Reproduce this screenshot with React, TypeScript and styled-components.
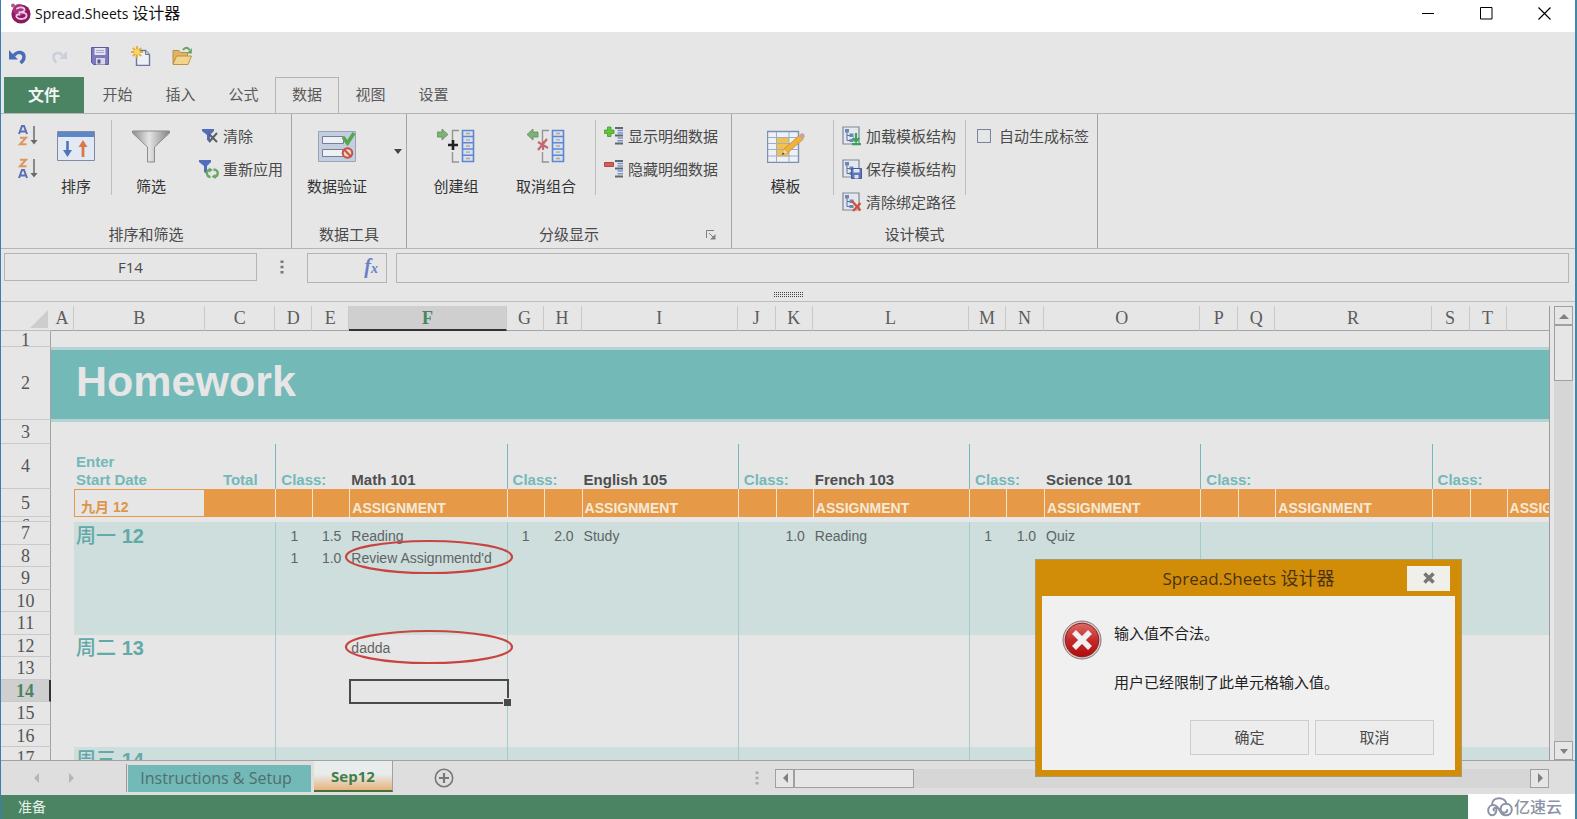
import React from "react";
import styled, { createGlobalStyle, css } from "styled-components";

const UI = `"Open Sans", "Noto Sans CJK SC", sans-serif`;
const SHEET = `"Liberation Sans", "Noto Sans CJK SC", sans-serif`;
const SERIF = `"Liberation Serif", "Noto Sans CJK SC", serif`;

const c = {
  bg: "#e6e6e6",
  line: "#b4b4b4",
  text: "#4a4a4a",
  dark: "#333333",
  green: "#4b8463",
  teal: "#72b9b8",
  tealLight: "#b5d3d3",
  tealLine: "#a3cdcd",
  band: "#cddedd",
  orange: "#e69a47",
};

const Global = createGlobalStyle`
  * { box-sizing: border-box; }
  body { margin: 0; background: ${c.bg}; }
  button, input { font: inherit; color: inherit; margin: 0; }
  button { padding: 0; border: 0; background: none; cursor: default; }
  svg { display: block; flex: none; }
`;

const Window = styled.div`
  position: relative;
  display: flex;
  flex-direction: column;
  height: 100vh;
  overflow: hidden;
  background: ${c.bg};
  border-left: 1px solid #3d7db5;
  border-right: 2px solid #3f8aa6;
  font: 15px/22px ${UI};
  color: ${c.text};
`;

const TitleBar = styled.header`
  display: flex;
  align-items: center;
  height: 32px;
  flex: none;
  padding: 0 2px 6px 8px;
  background: #fff;
  color: #111;
`;
const AppTitle = styled.h1`
  flex: 1;
  margin: 0 0 0 4px;
  font: 14px/22px ${UI};
`;
const Cjk = styled.span<{ $size: number }>`
  font-size: ${(p) => p.$size}px;
`;
const WindowButton = styled.button`
  display: grid;
  place-items: center;
  width: 58px;
  height: 26px;
`;

const QuickBar = styled.div`
  display: flex;
  align-items: center;
  gap: 21px;
  height: 45px;
  flex: none;
  padding: 2px 0 0 7px;
`;
const QuickButton = styled.button`
  width: 20px;
  height: 20px;
`;

const TabBar = styled.nav`
  display: flex;
  height: 37px;
  flex: none;
  padding-left: 3px;
  border-bottom: 1px solid ${c.line};
`;
const FileTab = styled.button`
  width: 80px;
  margin-right: 2px;
  background: ${c.green};
  color: #f2f5f3;
  font-size: 16px;
  font-weight: 700;
`;
const Tab = styled.button<{ $active?: boolean }>`
  width: ${(p) => (p.$active ? 64 : 63)}px;
  padding-bottom: 4px;
  border: 1px solid transparent;
  border-bottom: 0;
  color: #5a5a5a;
  ${(p) => p.$active && css`border-color: ${c.line};`}
`;

const Ribbon = styled.section`
  display: flex;
  height: 135px;
  flex: none;
  border-bottom: 1px solid ${c.line};
`;
const Group = styled.div<{ $width: number }>`
  position: relative;
  display: flex;
  flex-direction: column;
  width: ${(p) => p.$width}px;
  border-right: 1px solid #a4a4a4;
`;
const GroupBody = styled.div<{ $start?: number }>`
  display: flex;
  flex: 1;
  padding: 6px 0 0 ${(p) => p.$start ?? 0}px;
`;
const GroupLabel = styled.div`
  height: 25px;
  text-align: center;
`;
const Launcher = styled.button`
  position: absolute;
  right: 15px;
  bottom: 8px;
`;
const BigButton = styled.button<{ $width: number }>`
  display: flex;
  flex-direction: column;
  align-items: center;
  justify-content: flex-start;
  gap: 12px;
  width: ${(p) => p.$width}px;
  height: 80px;
  padding-top: 9px;
  color: ${c.dark};
`;
const DropArrow = styled.button`
  width: 24px;
  height: 62px;
  padding-right: 3px;
  display: grid;
  align-items: center;
  justify-items: end;
`;
const Divider = styled.div<{ $before?: number; $after?: number }>`
  width: 1px;
  height: 75px;
  margin: 0 ${(p) => p.$after ?? 0}px 0 ${(p) => p.$before ?? 0}px;
  background: #bdbdbd;
`;
const Stack = styled.div<{ $before?: number }>`
  display: flex;
  flex-direction: column;
  margin-left: ${(p) => p.$before ?? 0}px;
`;
const SmallButton = styled.button`
  display: flex;
  align-items: center;
  gap: 4px;
  height: 33px;
  padding-bottom: 2px;
  white-space: nowrap;
`;
const CheckLabel = styled.label`
  display: flex;
  align-items: center;
  gap: 8px;
  height: 32px;
  white-space: nowrap;
`;
const Check = styled.input`
  appearance: none;
  width: 14px;
  height: 14px;
  border: 1px solid #7b8596;
  box-shadow: inset 0 0 0 1px #dfe3ea;
`;

const FormulaBar = styled.div`
  position: relative;
  display: flex;
  align-items: flex-start;
  height: 53px;
  flex: none;
  padding: 4px 6px 0 3px;
  border-bottom: 1px solid #bdbdbd;
`;
const NameBox = styled.input`
  width: 253px;
  height: 28px;
  border: 1px solid ${c.line};
  background: none;
  text-align: center;
`;
const BarDots = styled.div`
  display: grid;
  place-items: center;
  width: 50px;
  height: 28px;
`;
const FxButton = styled.button`
  width: 80px;
  height: 30px;
  padding: 0 8px 2px 0;
  border: 1px solid ${c.line};
  margin-right: 9px;
  text-align: right;
  color: #6b80c4;
  font: italic 700 20px/24px ${SERIF};
`;
const FxSub = styled.span`
  font-size: 14px;
`;
const FormulaInput = styled.input`
  flex: 1;
  min-width: 0;
  height: 30px;
  border: 1px solid ${c.line};
  background: none;
`;
const Grip = styled.div`
  position: absolute;
  left: 50%;
  bottom: 4px;
  width: 29px;
  height: 5px;
  margin-left: -14px;
  background:
    repeating-linear-gradient(180deg, transparent 0 1px, ${c.bg} 1px 2px),
    repeating-linear-gradient(90deg, #444 0 1px, transparent 1px 2px);
`;

const Work = styled.main`
  display: flex;
  flex: 1;
  min-height: 0;
  padding-top: 4px;
`;
const SheetView = styled.div`
  flex: 1;
  min-width: 0;
  overflow: hidden;
  border-right: 1px solid #9c9c9c;
`;
const Sheet = styled.table`
  width: 100%;
  min-width: 1662px;
  table-layout: fixed;
  border-collapse: separate;
  border-spacing: 0;
  font: 14px/18px ${SHEET};
`;
const ColHead = styled.th<{ $active?: boolean }>`
  height: 25px;
  padding: 0;
  border-right: 1px solid #c9c9c9;
  border-bottom: 1px solid #a3a3a3;
  font: 18px/22px ${SERIF};
  color: #5c5c5c;
  ${(p) =>
    p.$active &&
    css`
      background: #cfcfcf;
      border-bottom: 2px solid #333;
      font-weight: 700;
      color: ${c.green};
    `}
`;
const Corner = styled.td`
  height: 25px;
  padding: 0 3px 2px 0;
  vertical-align: bottom;
  border-bottom: 1px solid #c0c0c0;
  svg {
    margin-left: auto;
  }
`;
const RowHead = styled.th<{ $active?: boolean; $h: number }>`
  height: ${(p) => p.$h}px;
  padding: 0;
  border-right: 1px solid #a3a3a3;
  border-bottom: 1px solid #c9c9c9;
  font: 18px/18px ${SERIF};
  color: #555;
  ${(p) =>
    p.$active &&
    css`
      background: #cfcfcf;
      border-right: 2px solid #333;
      font-weight: 700;
      color: ${c.green};
    `}
`;
const RowHeadClip = styled.div<{ $h: number }>`
  height: ${(p) => p.$h}px;
  overflow: hidden;
`;
const Cell = styled.td<{ $band?: boolean; $rule?: string; $align?: string }>`
  position: relative;
  padding: 0 2px;
  vertical-align: bottom;
  white-space: nowrap;
  color: #5f6464;
  text-align: ${(p) => p.$align ?? "left"};
  background: ${(p) => (p.$band ? c.band : "transparent")};
  ${(p) => p.$rule && css`border-left: 1px solid ${p.$rule};`}
  ${(p) => p.$align === "right" && css`padding-right: 8px;`}
`;
const DayCell = styled(Cell)`
  font-size: 20px;
  font-weight: 700;
  line-height: 18px;
  color: #62a9a8;
`;
const DayName = styled.span`
  font-weight: 500;
`;
const Banner = styled.td`
  padding: 0 0 8px 25px;
  border-top: 3px solid ${c.tealLight};
  border-bottom: 1px solid ${c.tealLight};
  background: ${c.teal};
  color: ${c.bg};
  font: 700 43px/50px ${SHEET};
`;
const BannerEdge = styled.td`
  border-top: 2px solid ${c.tealLight};
`;
const HeadCell = styled(Cell)<{ $teal?: boolean }>`
  font-size: 15px;
  font-weight: 700;
  color: ${(p) => (p.$teal ? c.teal : "#4f4f4f")};
  ${(p) => p.$rule && css`padding-left: 5px;`}
`;
const DateCell = styled(Cell)`
  padding-left: 6px;
  border: 1px solid ${c.orange};
  font-weight: 700;
  color: #dd9548;
`;
const OrangeCell = styled(Cell)`
  background: ${c.orange};
  color: #f5ead9;
  font-weight: 700;
`;
const Ring = styled.svg`
  position: absolute;
  left: -5px;
  top: -6px;
  z-index: 1;
`;
const Selection = styled.div`
  position: absolute;
  z-index: 1;
  inset: -1px -2px -2px 0;
  border: 2px solid #4a4a4a;
`;
const Handle = styled.div`
  position: absolute;
  right: -4px;
  bottom: -4px;
  width: 8px;
  height: 8px;
  background: #4a4a4a;
  border-left: 1px solid ${c.bg};
  border-top: 1px solid ${c.bg};
`;

const VScroll = styled.div`
  display: flex;
  flex-direction: column;
  width: 19px;
  margin: 0 2px 0 4px;
  background: #d6d6d6;
`;
const HScroll = styled.div`
  display: flex;
  flex: 1;
  height: 19px;
  background: #d6d6d6;
`;
const ScrollButton = styled.button`
  display: grid;
  place-items: center;
  width: 19px;
  height: 19px;
  flex: none;
  border: 1px solid #a0a0a0;
  background: ${c.bg};
`;
const Thumb = styled.div<{ $vertical?: boolean }>`
  border: 1px solid #a0a0a0;
  background: ${c.bg};
  ${(p) => (p.$vertical ? css`height: 56px;` : css`width: 120px;`)}
`;
const Spacer = styled.div`
  flex: 1;
`;

const SheetTabs = styled.div`
  display: flex;
  align-items: center;
  height: 35px;
  flex: none;
  padding-right: 26px;
  border-top: 1px solid #a3a3a3;
  background: #dedede;
`;
const TabArrows = styled.div`
  display: flex;
  justify-content: space-between;
  width: 126px;
  height: 28px;
  align-items: center;
  padding: 0 50px 0 30px;
  border-right: 1px solid #9b9b9b;
`;
const SheetTab = styled.button`
  width: 183px;
  height: 27px;
  margin: 0 3px 0 1px;
  padding: 0 7px 1px 0;
  background: ${c.teal};
  color: #4f6f6e;
  font-size: 16px;
`;
const ActiveSheetTab = styled.button`
  align-self: flex-start;
  width: 79px;
  height: 31px;
  border-right: 1px solid #a0a0a0;
  border-bottom: 2px solid #4b6d3c;
  background: linear-gradient(#e9ecec 45%, #e6b37c);
  color: #3f7d4c;
  font-weight: 700;
`;
const AddSheet = styled.button`
  margin-left: 41px;
`;
const TabSplit = styled.div`
  display: grid;
  place-items: center;
  width: 36px;
`;
const TabSpace = styled.div`
  flex: 0 1 285px;
`;
const StatusBar = styled.footer`
  height: 24px;
  flex: none;
  padding-left: 17px;
  background: ${c.green};
  color: #e8efe9;
  font-size: 14px;
  line-height: 24px;
`;
const Watermark = styled.div`
  position: absolute;
  right: -2px;
  bottom: 0;
  display: flex;
  align-items: center;
  gap: 1px;
  width: 109px;
  height: 25px;
  padding-left: 19px;
  background: #fff;
  color: #8c93a5;
  font: 500 16px/24px ${UI};
`;

const Dialog = styled.div`
  position: absolute;
  right: 113px;
  bottom: 42px;
  width: 427px;
  padding: 0 6px 6px;
  border: 1px solid #a99a72;
  background: #d28d08;
  color: #222;
`;
const DialogHead = styled.div`
  display: flex;
  align-items: center;
  height: 36px;
  padding-right: 5px;
`;
const DialogTitle = styled.h2`
  flex: 1;
  margin: 0;
  padding-left: 48px;
  text-align: center;
  font: 17px/26px ${UI};
  color: #4a3210;
`;
const DialogClose = styled.button`
  display: grid;
  place-items: center;
  width: 43px;
  height: 25px;
  background: #f0f0ea;
`;
const DialogBody = styled.div`
  display: flex;
  gap: 12px;
  padding: 24px 20px 0;
  background: #f0f0f0;
`;
const Message = styled.p`
  margin: 2px 0 27px;
`;
const DialogActions = styled.div`
  display: flex;
  justify-content: flex-end;
  gap: 6px;
  padding: 0 21px 15px;
  background: #f0f0f0;
`;
const DialogButton = styled.button`
  width: 119px;
  height: 35px;
  padding-bottom: 2px;
  border: 1px solid #cdcdcd;
  background: #ededed;
  color: ${c.text};
`;

/* ---------- icons ---------- */

const Logo = () => (
  <svg width="22" height="22" viewBox="0 0 22 22">
    <circle cx="12" cy="12" r="9.6" fill="#8c1a62" />
    <circle cx="10" cy="8" r="6" fill="#a8327c" />
    <circle cx="4" cy="3.4" r="2" fill="#b0578e" />
    <path d="M8 6.500c4-2 8-.8 7.500 1.500-.4 2-3.500 2.300-6 2.500 4-.5 8.500.5 8 3.500-.6 3.500-8 4-10 1-.8-1.500.8-3 3-2.500" fill="none" stroke="#f0c8e0" strokeWidth="1.800" strokeLinecap="round" />
  </svg>
);
const Undo = () => (
  <svg width="20" height="20" viewBox="0 0 20 20">
    <path d="M6 9.500c4-5 10-3.500 10 1.500 0 3-1.500 4.500-3.500 6" fill="none" stroke="#4a6dbb" strokeWidth="3.400" />
    <path d="M1 4v9.500h9z" fill="#4a6dbb" />
  </svg>
);
const Redo = () => (
  <svg width="20" height="20" viewBox="0 0 20 20">
    <path d="M13.500 9.500C10 5 4.500 7 4.500 11c0 2.500 1 4 3 5.500" fill="none" stroke="#ccd0dc" strokeWidth="2.600" />
    <path d="M18 5v8h-8z" fill="#ccd0dc" />
  </svg>
);
const Save = () => (
  <svg width="20" height="20" viewBox="0 0 20 20">
    <path d="M1.500 1.500h17v17H3.500l-2-2z" fill="#7e78bf" stroke="#605a9f" />
    <path d="M4.500 2h11v7h-11z" fill="#e4e4f0" />
    <path d="M6 4.500h8M6 6.500h8" stroke="#a9a7cc" />
    <path d="M6 12h9v6.500H6z" fill="#d6d6e4" />
    <path d="M7.500 13.500h3v4h-3z" fill="#5c5699" />
  </svg>
);
const NewFile = () => (
  <svg width="20" height="20" viewBox="0 0 20 20">
    <path d="M5.500 4.500h9l4 4v11h-13z" fill="#edf0f5" stroke="#6a7a98" strokeWidth="1.400" />
    <path d="M14.500 4.500v4h4" fill="#c6d0e2" stroke="#6a7a98" />
    <path d="M6 0v12M0 6h12M1.800 1.800l8.400 8.400M10.200 1.800l-8.400 8.400" stroke="#e9ab2d" strokeWidth="1.800" />
    <circle cx="6" cy="6" r="2.800" fill="#f7d768" />
  </svg>
);
const OpenFile = () => (
  <svg width="20" height="20" viewBox="0 0 20 20">
    <path d="M1 18V4.500h6l1.500 2h7V18z" fill="#e0b366" stroke="#b98d46" />
    <path d="M1 18.500 4.500 10h15L16 18.500z" fill="#f3d48d" stroke="#bf9248" />
    <path d="M11 4c2-3 5-3 6.500 0" fill="none" stroke="#5fa75d" strokeWidth="2" />
    <path d="M19.800 2v5.500h-5z" fill="#5fa75d" />
  </svg>
);
const SortAz = ({ desc }: { desc?: boolean }) => {
  const a = "M0 8 3 0h2l3 8M1.500 5.500h5";
  const z = "M1 .8h6L1 7.300h6.500";
  return (
    <svg width="24" height="22" viewBox="0 0 24 22">
      <g fill="none" strokeWidth="2">
        <path d={desc ? z : a} transform="translate(2 1)" stroke={desc ? "#de9560" : "#5a70b4"} />
        <path d={desc ? a : z} transform="translate(2 12)" stroke={desc ? "#5a70b4" : "#de9560"} />
        <path d="M17 1v17" stroke="#6a6a6a" strokeWidth="1.500" />
      </g>
      <path d="M13.500 15h7L17 19.500z" fill="#6a6a6a" />
    </svg>
  );
};
const SortIcon = () => (
  <svg width="38" height="34" viewBox="0 0 38 34">
    <path d="M.5 2.500h37v29H.5z" fill="#e3e9f2" stroke="#7d8ca4" />
    <path d="M1 3h36v5H1z" fill="#5d86c6" />
    <path d="M10.500 12v11" stroke="#4f74ba" strokeWidth="2.600" />
    <path d="M6 21h9l-4.500 7z" fill="#4f74ba" />
    <path d="M26 28V15" stroke="#d9794a" strokeWidth="2.800" />
    <path d="M21.500 18h9L26 11z" fill="#d9794a" />
  </svg>
);
const FunnelIcon = () => (
  <svg width="38" height="34" viewBox="0 0 38 34">
    <defs>
      <linearGradient id="funnel">
        <stop offset="0" stopColor="#8c8c8c" />
        <stop offset=".45" stopColor="#e4e4e4" />
        <stop offset="1" stopColor="#858585" />
      </linearGradient>
    </defs>
    <path d="M.5 2h37v2L22.500 18v15h-7V18L.5 4z" fill="url(#funnel)" stroke="#8b8b8b" />
  </svg>
);
const SmallFunnel = ({ refresh }: { refresh?: boolean }) => (
  <svg width="20" height="20" viewBox="0 0 20 20">
    {refresh ? (
      <>
        <path d="M0 1h12v2L8 7v8l-3-2V7L0 3z" fill="#536db8" />
        <path d="M11.500 10.500c-3 .5-4 2.500-3.500 4.500s1.500 3 3.500 3M14.500 10.500c3 0 4.500 2 4.200 4.200-.3 2-1.700 3.300-3.700 3.300" fill="none" stroke="#69a862" strokeWidth="2.400" />
        <path d="M10 8.500l4 2.500-4 2.500zM16.500 15v5l-4-2.500z" fill="#69a862" />
      </>
    ) : (
      <>
        <path d="M3 3h12v2l-4 4v7l-3-2V9L3 5z" fill="#536db8" />
        <path d="m10 8 8 8M18 7l-8 9" stroke="#5c5c66" strokeWidth="2" />
      </>
    )}
  </svg>
);
const ValidateIcon = () => (
  <svg width="38" height="34" viewBox="0 0 38 34">
    <path d="M.5 2.500h37v30H.5z" fill="#c5cede" stroke="#98a5b8" />
    <path d="M4.500 7.500h21v7h-21zM4.500 20.500h21v7h-21z" fill="#eef0f4" stroke="#71809a" />
    <path d="m25 8 4.500 6L36 4" fill="none" stroke="#55a84d" strokeWidth="3.600" />
    <circle cx="29.500" cy="24" r="4.800" fill="#ead0cb" stroke="#c4513d" strokeWidth="2" />
    <path d="m26 20.500 7 7" stroke="#c4513d" strokeWidth="2" />
  </svg>
);
const GroupIcon = ({ remove }: { remove?: boolean }) => (
  <svg width="38" height="34" viewBox="0 0 38 34">
    <path d={remove ? "M0 5.500 6 0v3h5v5H6v3z" : "M11 5.500 5 0v3H0v5h5v3z"} fill="#80b078" stroke="#5c9157" strokeWidth=".8" />
    <path d="M22 1.500h-6.500V12M15.500 23v10H22" fill="none" stroke="#949494" strokeWidth="1.400" />
    {remove ? (
      <path d="m11 13 10 6M20 10l-9 11M16 12v9" stroke="#c06a72" strokeWidth="2.200" />
    ) : (
      <path d="M11 16h10M16 11v10" stroke="#222" strokeWidth="2.600" />
    )}
    <path d="M25.500 1.500h11v31h-11z" fill="#d4e0f5" stroke="#6286cc" strokeWidth="1.600" />
    <path d="M25.500 7.500h11M25.500 13.800h11M25.500 20h11M25.500 26.300h11" stroke="#6286cc" strokeWidth="1.500" />
    <path d="M29 4.500h4M29 10.800h4M29 17h4M29 23.200h4M29 29.500h4" stroke="#bda67e" strokeWidth="1.300" />
  </svg>
);
const DetailIcon = ({ hide }: { hide?: boolean }) => (
  <svg width="20" height="20" viewBox="0 0 20 20">
    {hide ? (
      <path d="M.5 3.500h9v4h-9z" fill="#ce5f5f" stroke="#b04a4a" />
    ) : (
      <path d="M3.500 1h3.500v3h3v3.500H7v3H3.500v-3h-3V4h3z" fill="#62c33c" stroke="#47982c" strokeWidth=".8" />
    )}
    <path d="M11 2h8M11 9.500h8M11 17.500h8" stroke="#5d6673" strokeWidth="1.800" />
    <path d="M13.500 4.500H19M13.500 7H19M13.500 12H19M13.500 14.800H19" stroke="#7794cd" strokeWidth="1.600" />
  </svg>
);
const TemplateIcon = () => (
  <svg width="38" height="34" viewBox="0 0 38 34">
    <path d="M.5 2.500h31v31H.5z" fill="#eef1f6" stroke="#7b90b2" strokeWidth="1.400" />
    <path d="M10 8.500h12v19H10z" fill="#f2c14d" />
    <path d="M1 8.500h30M1 14.500h30M1 20.500h30M1 27h30M9.500 3v30M22 3v30" stroke="#9eadc8" />
    <path d="m15 25.500 2-5.500L32 6.500l4 4L20.500 24z" fill="#eeb13c" stroke="#ba893f" strokeWidth=".7" />
    <path d="m32 6.500 2-2c2-1 4.500 1.500 3.500 3.500L36 10.500z" fill="#c9a0a6" />
    <path d="m15 25.500 2-5 3.500 3.500z" fill="#f0dcb8" />
    <path d="m15 26 1-2.500 1.500 1.300z" fill="#333" />
  </svg>
);
const TreeFileIcon = ({ kind }: { kind: "load" | "save" | "clear" }) => (
  <svg width="20" height="20" viewBox="0 0 20 20">
    <path d="M1 1h16v17H1z" fill="#e3e8ef" stroke="#7c8798" strokeWidth="1.200" />
    <path d="M5 6v8.500h4M5 9.500h4" fill="none" stroke="#5b6f93" />
    <path d="M3 3h4v3.500H3zM7.500 7.500h4V11h-4zM7.500 13h4v3h-4z" fill="#6c87b4" />
    {kind === "load" && <path d="M14 7v7M10.800 12l3.200 3.500 3.200-3.500M10 18.200h9" fill="none" stroke="#3aa35a" strokeWidth="2.200" />}
    {kind === "save" && (
      <>
        <path d="M9.500 9.500h10v10h-10z" fill="#6076bc" stroke="#46599b" />
        <path d="M11.500 10h6v3.500h-6zM12.500 16h4v3.500h-4z" fill="#dfe4f2" />
      </>
    )}
    {kind === "clear" && <path d="m10 9 8.500 9.500M18.500 11 11 19" stroke="#d4503e" strokeWidth="2.400" />}
  </svg>
);
const Tri = ({ dir, fill = "#808080" }: { dir: "up" | "down" | "left" | "right"; fill?: string }) => {
  const d = { up: "M0 8h10L5 3z", down: "M1 3h8L5 8z", left: "M8 0v10L3 5z", right: "M3 0v10l5-5z" }[dir];
  return (
    <svg width="10" height="10" viewBox="0 0 10 10">
      <path d={d} fill={fill} />
    </svg>
  );
};
const Dots = ({ fill }: { fill: string }) => (
  <svg width="4" height="14" viewBox="0 0 4 14">
    <path d="M.5.500h3v2.500h-3zM.5 5.700h3v2.500h-3zM.5 11h3v2.500h-3z" fill={fill} />
  </svg>
);
const ErrorIcon = () => (
  <svg width="40" height="40" viewBox="0 0 40 40">
    <defs>
      <linearGradient id="err" x2="0" y2="1">
        <stop offset="0" stopColor="#dc6a66" />
        <stop offset=".5" stopColor="#c42a2a" />
        <stop offset="1" stopColor="#b00c0c" />
      </linearGradient>
    </defs>
    <circle cx="20" cy="20" r="19" fill="#d0cccc" stroke="#8f7070" strokeWidth="1" />
    <circle cx="20" cy="20" r="16.800" fill="url(#err)" stroke="#8f1c1c" />
    <path d="m12 12 16 16M28 12 12 28" stroke="#f1efef" strokeWidth="5.500" />
  </svg>
);
const CloudLogo = () => (
  <svg width="26" height="20" viewBox="0 0 26 20">
    <g fill="none" stroke="#8c93a5" strokeWidth="2" strokeLinecap="round">
      <path d="M5 7.500C5 3.500 8.500 1.200 12 1.200c4 0 7 2.500 7.300 5.300" />
      <path d="M7 13.500a1.500 1.500 0 1 1 2.500-1.200c0 3.500-2 6-4 6-2.500 0-4.300-2.300-4.300-5C1.200 10 3.700 8 6.500 8c3.500 0 5 3 6.500 6 1.300 2.700 3 4.300 5.800 4.300 3.400 0 6-2.400 6-5.800s-2.600-5.700-5.700-5.700c-3.300 0-5.400 2.300-5.400 5.200 0 2.300 1.700 3.700 3.500 3.700s3-1.200 3-2.700" />
    </g>
  </svg>
);
const RedRing = () => (
  <Ring width="170" height="36" viewBox="0 0 170 36">
    <ellipse cx="85" cy="18" rx="83" ry="16" fill="none" stroke="#c94440" strokeWidth="2.200" />
  </Ring>
);

/* ---------- sheet ---------- */

const widths = [50, 23, 131, 70, 37, 37, 157, 37, 38, 156, 38, 37, 156, 37, 38, 156, 38, 37, 156, 38, 37, 156];
const letters = "ABCDEFGHIJKLMNOPQRSTU".split("");
const courses = ["Math 101", "English 105", "French 103", "Science 101", "", ""];

type Entry = [string, string, string];
const entries: Record<number, Entry[]> = {
  7: [["1", "1.5", "Reading"], ["1", "2.0", "Study"], ["", "1.0", "Reading"], ["1", "1.0", "Quiz"]],
  8: [["1", "1.0", "Review Assignmentd'd"]],
  12: [["", "", "dadda"]],
};
const days: Record<number, [string, string]> = { 7: ["周一", "12"], 12: ["周二", "13"], 17: ["周三", "14"] };
const ringed = [8, 12];
const heights = [23, 22, 23, 22, 23, 22, 23, 22, 23, 22, 22];

const Head = ({ n, h }: { n: number; h: number }) => (
  <RowHead scope="row" $h={h} $active={n === 14}>
    {n}
  </RowHead>
);

const DayRow = ({ n, h }: { n: number; h: number }) => {
  const band = n < 12 || n > 16;
  const day = days[n];
  return (
    <tr>
      <Head n={n} h={h} />
      <td />
      <DayCell $band={band} colSpan={2}>
        {day && (
          <>
            <DayName>{day[0]}</DayName> {day[1]}
          </>
        )}
      </DayCell>
      {courses.map((_, i) => {
        const e = entries[n]?.[i] ?? ["", "", ""];
        return (
          <React.Fragment key={i}>
            <Cell $band={band} $rule={c.tealLine} $align="center">{e[0]}</Cell>
            <Cell $band={band} $align="right">{e[1]}</Cell>
            <Cell $band={band}>
              {e[2]}
              {i === 0 && ringed.includes(n) && <RedRing />}
              {i === 0 && n === 14 && (
                <Selection>
                  <Handle />
                </Selection>
              )}
            </Cell>
          </React.Fragment>
        );
      })}
    </tr>
  );
};

const Homework = () => (
  <Sheet>
    <colgroup>
      {widths.map((w, i) => (
        <col key={i} style={{ width: w }} />
      ))}
    </colgroup>
    <thead>
      <tr>
        <Corner>
          <svg width="18" height="18" viewBox="0 0 18 18">
            <path d="M18 0v18H0z" fill="#cdcdcd" />
          </svg>
        </Corner>
        {letters.map((l) => (
          <ColHead key={l} scope="col" $active={l === "F"}>
            {l}
          </ColHead>
        ))}
      </tr>
    </thead>
    <tbody>
      <tr>
        <RowHead scope="row" $h={16}>
          <RowHeadClip $h={15}>1</RowHeadClip>
        </RowHead>
        <td colSpan={21} />
      </tr>
      <tr>
        <Head n={2} h={73} />
        <Banner colSpan={21}>Homework</Banner>
      </tr>
      <tr>
        <Head n={3} h={24} />
        <BannerEdge colSpan={21} />
      </tr>
      <tr>
        <Head n={4} h={45} />
        <td />
        <HeadCell $teal>
          Enter
          <br />
          Start Date
        </HeadCell>
        <HeadCell $teal $align="center">Total</HeadCell>
        {courses.map((name, i) => (
          <React.Fragment key={i}>
            <HeadCell $teal $rule={c.teal} colSpan={2}>Class:</HeadCell>
            <HeadCell>{name}</HeadCell>
          </React.Fragment>
        ))}
      </tr>
      <tr>
        <Head n={5} h={28} />
        <td />
        <DateCell>九月 12</DateCell>
        <OrangeCell />
        {courses.map((_, i) => (
          <React.Fragment key={i}>
            <OrangeCell $rule="#f3e3cf" />
            <OrangeCell $rule="#f3e3cf" />
            <OrangeCell $rule="#f3e3cf">ASSIGNMENT</OrangeCell>
          </React.Fragment>
        ))}
      </tr>
      <tr>
        <RowHead scope="row" $h={5}>
          <RowHeadClip $h={4}>6</RowHeadClip>
        </RowHead>
        <td colSpan={21} />
      </tr>
      {heights.map((h, i) => (
        <DayRow key={i} n={i + 7} h={h} />
      ))}
    </tbody>
  </Sheet>
);

export default function App() {
  return (
    <Window>
      <Global />
      <TitleBar>
        <Logo />
        <AppTitle>
          Spread.Sheets <Cjk $size={16}>设计器</Cjk>
        </AppTitle>
        <WindowButton aria-label="最小化">
          <svg width="13" height="13"><path d="M0 6.500h12" stroke="#000" /></svg>
        </WindowButton>
        <WindowButton aria-label="最大化">
          <svg width="13" height="13"><path d="M.5.500h11.500v11.500H.5z" fill="none" stroke="#000" /></svg>
        </WindowButton>
        <WindowButton aria-label="关闭">
          <svg width="13" height="13"><path d="m.5.500 12 12M12.500.500l-12 12" stroke="#000" strokeWidth="1.200" /></svg>
        </WindowButton>
      </TitleBar>

      <QuickBar>
        <QuickButton aria-label="撤销"><Undo /></QuickButton>
        <QuickButton aria-label="恢复"><Redo /></QuickButton>
        <QuickButton aria-label="保存"><Save /></QuickButton>
        <QuickButton aria-label="新建"><NewFile /></QuickButton>
        <QuickButton aria-label="打开"><OpenFile /></QuickButton>
      </QuickBar>

      <TabBar>
        <FileTab>文件</FileTab>
        {["开始", "插入", "公式", "数据", "视图", "设置"].map((t) => (
          <Tab key={t} $active={t === "数据"}>{t}</Tab>
        ))}
      </TabBar>

      <Ribbon>
        <Group $width={291}>
          <GroupBody $start={16}>
            <Stack>
              <SmallButton aria-label="升序"><SortAz /></SmallButton>
              <SmallButton aria-label="降序"><SortAz desc /></SmallButton>
            </Stack>
            <BigButton $width={70}><SortIcon />排序</BigButton>
            <Divider />
            <BigButton $width={78}><FunnelIcon />筛选</BigButton>
            <Stack $before={9}>
              <SmallButton><SmallFunnel />清除</SmallButton>
              <SmallButton><SmallFunnel refresh />重新应用</SmallButton>
            </Stack>
          </GroupBody>
          <GroupLabel>排序和筛选</GroupLabel>
        </Group>
        <Group $width={115}>
          <GroupBody>
            <BigButton $width={90}><ValidateIcon />数据验证</BigButton>
            <DropArrow aria-label="数据验证选项"><Tri dir="down" fill="#444" /></DropArrow>
          </GroupBody>
          <GroupLabel>数据工具</GroupLabel>
        </Group>
        <Group $width={325}>
          <GroupBody>
            <BigButton $width={98}><GroupIcon />创建组</BigButton>
            <BigButton $width={82}><GroupIcon remove />取消组合</BigButton>
            <Divider $before={8} />
            <Stack $before={8}>
              <SmallButton><DetailIcon />显示明细数据</SmallButton>
              <SmallButton><DetailIcon hide />隐藏明细数据</SmallButton>
            </Stack>
          </GroupBody>
          <GroupLabel>分级显示</GroupLabel>
          <Launcher aria-label="分级显示设置">
            <svg width="10" height="10"><path d="M.5 8V.500H8M3 3l4 4" fill="none" stroke="#808080" /><path d="M9.500 4v5.500H4z" fill="#808080" /></svg>
          </Launcher>
        </Group>
        <Group $width={366}>
          <GroupBody $start={6}>
            <BigButton $width={95}><TemplateIcon />模板</BigButton>
            <Divider />
            <Stack $before={8}>
              <SmallButton><TreeFileIcon kind="load" />加载模板结构</SmallButton>
              <SmallButton><TreeFileIcon kind="save" />保存模板结构</SmallButton>
              <SmallButton><TreeFileIcon kind="clear" />清除绑定路径</SmallButton>
            </Stack>
            <Divider $before={9} $after={11} />
            <CheckLabel>
              <Check type="checkbox" />
              自动生成标签
            </CheckLabel>
          </GroupBody>
          <GroupLabel>设计模式</GroupLabel>
        </Group>
      </Ribbon>

      <FormulaBar>
        <NameBox aria-label="名称框" defaultValue="F14" />
        <BarDots><Dots fill="#777" /></BarDots>
        <FxButton aria-label="插入函数">f<FxSub>x</FxSub></FxButton>
        <FormulaInput aria-label="编辑栏" />
        <Grip />
      </FormulaBar>

      <Work>
        <SheetView>
          <Homework />
        </SheetView>
        <VScroll>
          <ScrollButton aria-label="向上滚动"><Tri dir="up" /></ScrollButton>
          <Thumb $vertical />
          <Spacer />
          <ScrollButton aria-label="向下滚动"><Tri dir="down" /></ScrollButton>
        </VScroll>
      </Work>

      <SheetTabs>
        <TabArrows>
          <Tri dir="left" fill="#b5b5b5" />
          <Tri dir="right" fill="#b5b5b5" />
        </TabArrows>
        <SheetTab>Instructions &amp; Setup</SheetTab>
        <ActiveSheetTab>Sep12</ActiveSheetTab>
        <AddSheet aria-label="新建工作表">
          <svg width="20" height="20" viewBox="0 0 20 20">
            <circle cx="10" cy="10" r="8.700" fill="none" stroke="#777" strokeWidth="1.600" />
            <path d="M10 5v10M5 10h10" stroke="#777" strokeWidth="2.200" />
          </svg>
        </AddSheet>
        <TabSpace />
        <TabSplit><Dots fill="#aaa" /></TabSplit>
        <HScroll>
          <ScrollButton aria-label="向左滚动"><Tri dir="left" /></ScrollButton>
          <Thumb />
          <Spacer />
          <ScrollButton aria-label="向右滚动"><Tri dir="right" /></ScrollButton>
        </HScroll>
      </SheetTabs>
      <StatusBar>准备</StatusBar>
      <Watermark><CloudLogo />亿速云</Watermark>

      <Dialog role="dialog" aria-labelledby="dialog-title">
        <DialogHead>
          <DialogTitle id="dialog-title">
            Spread.Sheets <Cjk $size={18}>设计器</Cjk>
          </DialogTitle>
          <DialogClose aria-label="关闭对话框">
            <svg width="12" height="12"><path d="m1.500 1.500 9 9M10.500 1.500l-9 9" stroke="#777" strokeWidth="3.600" /></svg>
          </DialogClose>
        </DialogHead>
        <DialogBody>
          <ErrorIcon />
          <div>
            <Message>输入值不合法。</Message>
            <Message>用户已经限制了此单元格输入值。</Message>
          </div>
        </DialogBody>
        <DialogActions>
          <DialogButton>确定</DialogButton>
          <DialogButton>取消</DialogButton>
        </DialogActions>
      </Dialog>
    </Window>
  );
}
